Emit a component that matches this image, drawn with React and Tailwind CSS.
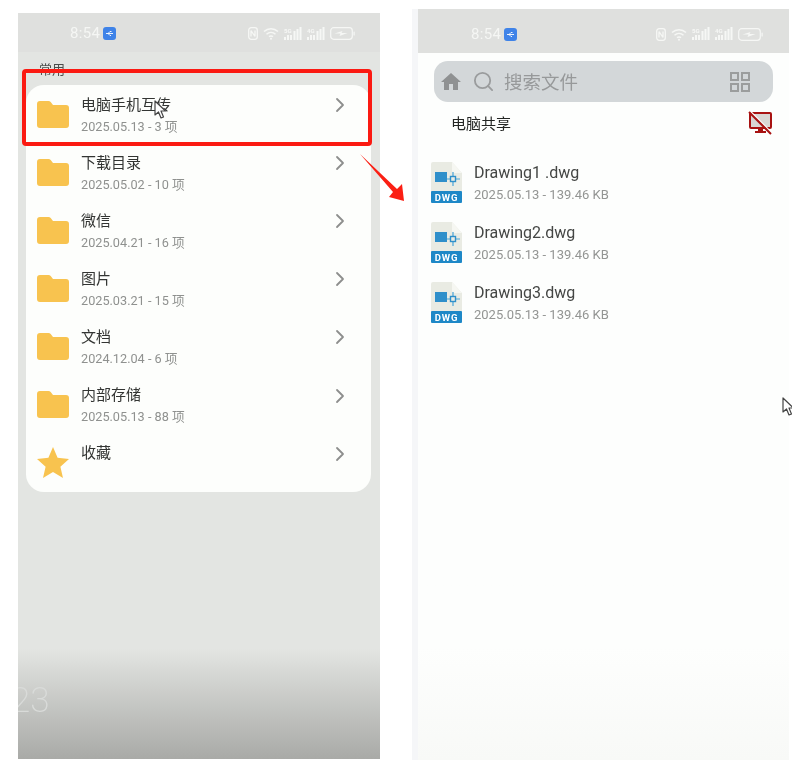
import React from 'react'
import { ChevronRight, Search } from 'lucide-react'

const folders = [
  { name: '电脑手机互传', meta: '2025.05.13 - 3 项' },
  { name: '下载目录', meta: '2025.05.02 - 10 项' },
  { name: '微信', meta: '2025.04.21 - 16 项' },
  { name: '图片', meta: '2025.03.21 - 15 项' },
  { name: '文档', meta: '2024.12.04 - 6 项' },
  { name: '内部存储', meta: '2025.05.13 - 88 项' },
]

const files = ['Drawing1 .dwg', 'Drawing2.dwg', 'Drawing3.dwg']

function FolderIcon() {
  return (
    <svg width="32" height="27" viewBox="0 0 32 27" className="shrink-0">
      <path d="M0 3a3 3 0 0 1 3-3h8.500a3 3 0 0 1 2.200 1l2.300 3h13a3 3 0 0 1 3 3v17a3 3 0 0 1-3 3H3a3 3 0 0 1-3-3z" fill="#f8c34f" />
    </svg>
  )
}

function StarIcon() {
  return (
    <svg width="32" height="31" viewBox="0 0 32 31" className="shrink-0">
      <path d="M16 0l4.600 10.800L32 12l-8.600 7.800L26 31l-10-6-10 6 2.600-11.200L0 12l11.400-1.200z" fill="#f8c34f" />
    </svg>
  )
}

function Signal({ label }) {
  return (
    <svg width="18" height="14" viewBox="0 0 18 14" fill="#f6f7f5">
      <text x="0" y="5.500" fontSize="6" fontWeight="700" fontFamily="Roboto, sans-serif">{label}</text>
      <rect x="0" y="10" width="2" height="3" />
      <rect x="3" y="8" width="2" height="5" />
      <rect x="6" y="8" width="2" height="5" />
      <rect x="9.500" y="4" width="2" height="9" />
      <rect x="12.500" y="2" width="2" height="11" />
      <rect x="15.500" y="0" width="2" height="13" />
    </svg>
  )
}

function StatusBar({ className }) {
  return (
    <div className={`flex items-center bg-[#dfe0de] shrink-0 ${className}`}>
      <span className="text-[15px] text-[#f5f6f4] tracking-[0.3px] font-['Roboto',sans-serif]">8:54</span>
      <span className="ml-[3px] w-[13px] h-[13px] rounded-[3px] bg-[#3f83e8] flex items-center justify-center">
        <svg width="9" height="7" viewBox="0 0 9 7" stroke="#ffffff" strokeWidth="0.900" fill="none">
          <path d="M1 3.500h7M3 3.500l2-2h1.500M3 3.500l2 2h1" />
        </svg>
      </span>
      <div className="ml-auto flex items-center gap-[5px]">
        <svg width="10" height="13" viewBox="0 0 10 13" stroke="#f6f7f5" strokeWidth="1.300" fill="none">
          <rect x="0.700" y="0.700" width="8.600" height="11.600" rx="2.500" />
          <path d="M3 3.500v6M3 3.500l4 6M7 3.500v6" />
        </svg>
        <svg width="16" height="13" viewBox="0 0 16 13" stroke="#f6f7f5" strokeWidth="1.500" fill="none">
          <path d="M1 4.500c4-3.800 10-3.800 14 0M3.500 7.200c2.600-2.300 6.400-2.300 9 0M6 9.700c1.200-.9 2.800-.9 4 0" />
          <circle cx="8" cy="11.700" r="1" fill="#f6f7f5" stroke="none" />
        </svg>
        <Signal label="5G" />
        <Signal label="4G" />
        <svg width="25" height="13" viewBox="0 0 25 13" fill="none">
          <rect x="0.700" y="0.700" width="21.600" height="11.600" rx="3" stroke="#f6f7f5" strokeWidth="1.200" />
          <path d="M4.500 6.500l8-2.500-1 2h6l-8 3 1-2.500z" fill="#f6f7f5" />
          <rect x="23.500" y="4.500" width="1.200" height="4" rx="0.600" fill="#f6f7f5" />
        </svg>
      </div>
    </div>
  )
}

function FolderRow({ icon, name, meta }) {
  return (
    <div className="h-[58.1px] flex items-center pl-[11px] pr-[19px]">
      <div className="w-[32px] flex justify-center">{icon}</div>
      <div className="ml-[12px] flex-1 mt-[1px]">
        <div className="text-[15px] leading-[22px] text-[#333533]">{name}</div>
        <div className="text-[12.7px] leading-[20px] h-[20px] mt-[2px] text-[#8f918f] font-['Roboto','Noto_Sans_CJK_SC',sans-serif]">{meta}</div>
      </div>
      <ChevronRight size={24} strokeWidth={1.8} className="text-[#8d8e8d] -mt-[18px]" />
    </div>
  )
}

function DwgIcon() {
  return (
    <svg width="31" height="41" viewBox="0 0 31 41" className="shrink-0">
      <path d="M0 2a2 2 0 0 1 2-2h19l10 11v20H0z" fill="#e9ebe3" />
      <path d="M21 0l10 11h-8a2 2 0 0 1-2-2z" fill="#f6f7f2" />
      <rect x="4" y="10" width="12" height="10" fill="#2f8fca" />
      <path d="M16 17h13M22 10v14" stroke="#4aa5d8" strokeWidth="1.200" />
      <rect x="19.500" y="14.500" width="5" height="5" fill="#e9ebe3" stroke="#2f8fca" strokeWidth="1.400" />
      <rect x="0" y="29" width="31" height="12" rx="1" fill="#1e88c7" />
      <text x="15.500" y="38.500" textAnchor="middle" fontSize="9.500" fontWeight="700" letterSpacing="0.800" fill="#ffffff" fontFamily="Roboto, sans-serif">DWG</text>
    </svg>
  )
}

function FileRow({ name }) {
  return (
    <div className="h-[60px] flex items-center pl-[13px]">
      <DwgIcon />
      <div className="ml-[12px] mt-[2px]">
        <div className="text-[16px] leading-[22px] text-[#444644] font-['Roboto',sans-serif]">{name}</div>
        <div className="text-[13px] leading-[18px] mt-[2px] text-[#939593] font-['Roboto',sans-serif]">2025.05.13 - 139.46 KB</div>
      </div>
    </div>
  )
}

function Cursor({ className }) {
  return (
    <svg width="13" height="20" viewBox="0 0 13 20" className={`absolute ${className}`}>
      <path d="M1 1v14l3.500-3 2.500 6 2.500-1-2.500-6h4.500z" fill="#ffffff" stroke="#444444" strokeWidth="1.200" strokeLinejoin="round" />
    </svg>
  )
}

export default function App() {
  return (
    <div className="relative w-[792px] h-[770px] overflow-hidden bg-white flex items-start blur-[0.4px] font-['Noto_Sans_CJK_SC','Noto_Sans',sans-serif]">
      {/* left phone */}
      <div className="relative ml-[18px] mt-[13px] w-[362px] h-[746px] bg-[#e3e5e2] flex flex-col overflow-hidden">
        <StatusBar className="h-[39px] pt-[2px] pl-[52px] pr-[25px]" />
        <div className="text-[13px] leading-[18px] mt-[8px] ml-[21px] text-[#4a4c4a]">常用</div>
        <div className="mt-[7px] ml-[8px] w-[345px] h-[407px] rounded-[18px] bg-[#fdfefc] shrink-0">
          {folders.map((f) => (
            <FolderRow key={f.name} icon={<FolderIcon />} name={f.name} meta={f.meta} />
          ))}
          <FolderRow icon={<StarIcon />} name="收藏" />
        </div>
        <div className="mt-auto h-[110px] bg-gradient-to-b from-[#e3e5e2] to-[#a9aaa7]" />
        <span className="absolute -left-[7px] top-[668px] text-[35px] leading-[40px] font-extralight text-[#d9dbd9] font-['Roboto',sans-serif]">23</span>
      </div>

      {/* right phone */}
      <div className="ml-[38px] mt-[9px] w-[371px] h-[751px] bg-gradient-to-b from-[#fdfefd] from-85% to-[#f8f9f7] flex flex-col shadow-[-6px_0_0_#f5f6f8]">
        <StatusBar className="h-[44px] pt-[6px] pl-[53px] pr-[26px]" />
        <div className="mt-[8px] mx-[16px] h-[41px] rounded-[14px] bg-[#d3d7d9] flex items-center pl-[5px] pr-[23px]">
          <svg width="24" height="24" viewBox="0 0 24 24" fill="#8f9192" className="shrink-0">
            <path d="M12 3L2 12h3v8h5v-6h4v6h5v-8h3z" />
          </svg>
          <Search size={23} strokeWidth={1.9} className="ml-[9px] text-[#9a9c9d]" />
          <span className="ml-[9px] text-[18.5px] text-[#97999a]">搜索文件</span>
          <div className="ml-auto grid grid-cols-2 gap-[2px]">
            <span className="w-[9px] h-[9px] border-2 border-[#9b9d9d]" />
            <span className="w-[9px] h-[9px] border-2 border-[#9b9d9d]" />
            <span className="w-[9px] h-[9px] border-2 border-[#9b9d9d]" />
            <span className="w-[9px] h-[9px] border-2 border-[#9b9d9d]" />
          </div>
        </div>
        <div className="mt-[8px] h-[26px] flex items-center pl-[33px] pr-[17px]">
          <span className="text-[15px] text-[#232523]">电脑共享</span>
          <svg width="24" height="24" viewBox="0 0 24 24" fill="none" className="ml-auto">
            <path d="M3 2h19a1 1 0 0 1 1 1v13a1 1 0 0 1-1 1H3a1 1 0 0 1-1-1V3a1 1 0 0 1 1-1z" fill="#d9d6d4" stroke="#a81212" strokeWidth="2" />
            <path d="M10 17h5v3h3v2H7v-2h3z" fill="#a81212" />
            <path d="M2.500 0.500l22 22" stroke="#ffffff" strokeWidth="1.500" />
            <path d="M1 1l22 22" stroke="#a81212" strokeWidth="2" />
          </svg>
        </div>
        <div className="mt-[16px]">
          {files.map((name) => (
            <FileRow key={name} name={name} />
          ))}
        </div>
      </div>

      {/* annotations over the screenshots */}
      <div className="absolute left-[22px] top-[69px] w-[350px] h-[77px] border-[4px] border-[#fb1a12] rounded-[4px]" />
      <svg width="60" height="60" viewBox="0 0 60 60" className="absolute left-[355px] top-[150px]">
        <path d="M5 4L42 39l5-5 2 17-15-4 4-5z" fill="#fb1f14" />
      </svg>
      <Cursor className="left-[154px] top-[100px]" />
      <Cursor className="left-[782px] top-[397px]" />
    </div>
  )
}
